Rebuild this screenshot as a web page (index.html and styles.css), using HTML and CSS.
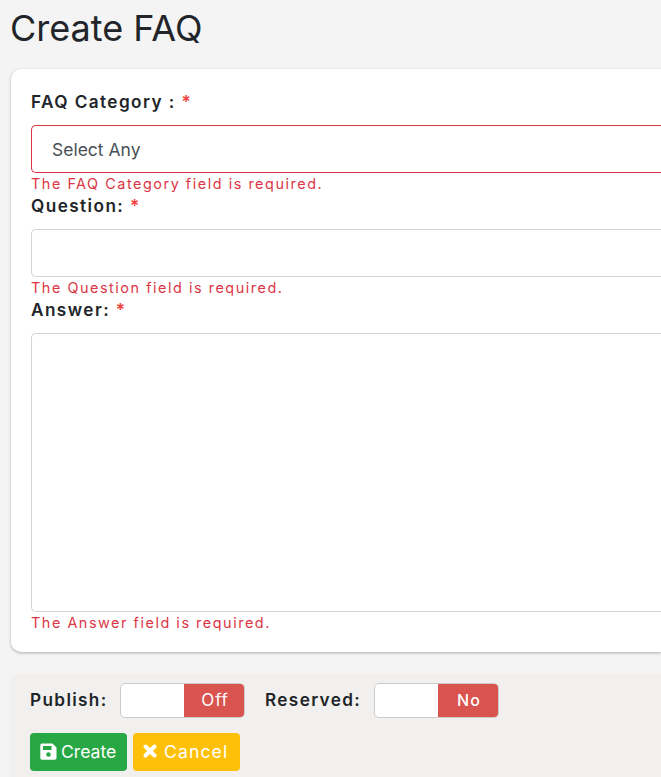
FILE: index.html
```html
<!DOCTYPE html>
<html lang="en">
<head>
<meta charset="utf-8">
<title>Create FAQ</title>
<link rel="stylesheet" href="styles.css">
</head>
<body>
<main class="page">
  <h1>Create FAQ</h1>
  <section class="card">
    <div class="field">
      <label>FAQ Category : <span class="req">*</span></label>
      <div class="control invalid">Select Any</div>
      <p class="error">The FAQ Category field is required.</p>
    </div>
    <div class="field">
      <label>Question: <span class="req">*</span></label>
      <div class="control"></div>
      <p class="error">The Question field is required.</p>
    </div>
    <div class="field">
      <label>Answer: <span class="req">*</span></label>
      <div class="control area"></div>
      <p class="error">The Answer field is required.</p>
    </div>
  </section>
  <footer class="footer">
    <div class="toggles">
      <span class="toggle-label publish">Publish:</span>
      <div class="toggle"><span class="handle"></span><span class="state off">Off</span></div>
      <span class="toggle-label reserved">Reserved:</span>
      <div class="toggle"><span class="handle"></span><span class="state no">No</span></div>
    </div>
    <div class="actions">
      <button class="btn create"><svg width="17" height="17" viewBox="0 0 17 17"><path fill="#fff" fill-rule="evenodd" d="M2 .5h10.500l4 4V15a1.700 1.700 0 0 1-1.700 1.700H2A1.700 1.700 0 0 1 .3 15V2.200A1.700 1.700 0 0 1 2 .5zM3 3v4h8.500V3zM8.500 9.200a2.300 2.300 0 1 0 0 4.600a2.300 2.300 0 0 0 0-4.600z"/></svg><span>Create</span></button>
      <button class="btn cancel"><svg width="14" height="14" viewBox="0 0 14 14"><path stroke="#fff" stroke-width="4" stroke-linecap="round" d="M2.500 2.500l9 9M11.500 2.500l-9 9"/></svg><span>Cancel</span></button>
    </div>
  </footer>
</main>
</body>
</html>
```
FILE: styles.css
```css
* { box-sizing: border-box; }
body { margin: 0; background: #f4f4f4; color: #212529; font-family: Inter, "Liberation Sans", sans-serif; }
.page { height: 777px; padding: 7px 0 0 11px; overflow: hidden; }
h1 { margin: 0 0 19px -1px; height: 43px; font-size: 36px; line-height: 43px; font-weight: 420; letter-spacing: 0; }
.card { height: 583px; padding: 20px 0 20px 20px; background: #fff; border-radius: 10px 0 0 10px; box-shadow: 0 1px 3px rgba(0,0,0,.3); }
.field { height: 104px; }
label { display: block; height: 36px; font-size: 17.2px; line-height: 26px; font-weight: 600; letter-spacing: 1.42px; }
.req { color: #f0413c; }
.control { height: 48px; padding-left: 20px; border: 1px solid #ced4da; border-right: 0; border-radius: 5px 0 0 5px; font-size: 17.5px; line-height: 48px; color: #495057; }
.control.invalid { border-color: #dc3545; }
.control.area { height: 279px; }
.error { margin: 0; font-size: 14.4px; line-height: 22px; letter-spacing: 1.54px; color: #dc3545; }
.footer { margin: 21px 0 0 -1px; height: 110px; padding: 10px 0 0 20px; background: #f1f0ee; border-radius: 10px 0 0 0; }
.toggles, .actions { display: flex; }
.toggle-label { font-size: 17.2px; font-weight: 600; letter-spacing: 1.35px; line-height: 34px; }
.publish { width: 90px; }
.reserved { width: 109px; margin-left: 20px; }
.toggle { display: flex; width: 125px; height: 35px; border: 1px solid #ccc; border-radius: 5px; overflow: hidden; background: #fff; }
.handle { width: 63px; }
.state { flex: 1; background: #d9534f; color: #fff; text-align: center; font-size: 17px; font-weight: 500; line-height: 33px; letter-spacing: 1px; }
.off { padding-left: 2px; font-weight: 400; letter-spacing: .8px; }
.no { font-size: 16px; padding-left: 2px; }
.actions { margin-top: 15px; gap: 6px; }
.btn { display: flex; align-items: center; height: 38px; padding: 0 10px; border: 0; border-radius: 4px; color: #fff; font: 400 17.6px Inter, "Liberation Sans", sans-serif; white-space: nowrap; }
.btn svg { flex: none; margin-bottom: 2px; }
.btn span { padding-bottom: 1px; }
.create { width: 97px; gap: 4px; background: #28a745; }
.cancel { width: 107px; padding-right: 0; gap: 7px; background: #ffc107; letter-spacing: 1.1px; }
```
